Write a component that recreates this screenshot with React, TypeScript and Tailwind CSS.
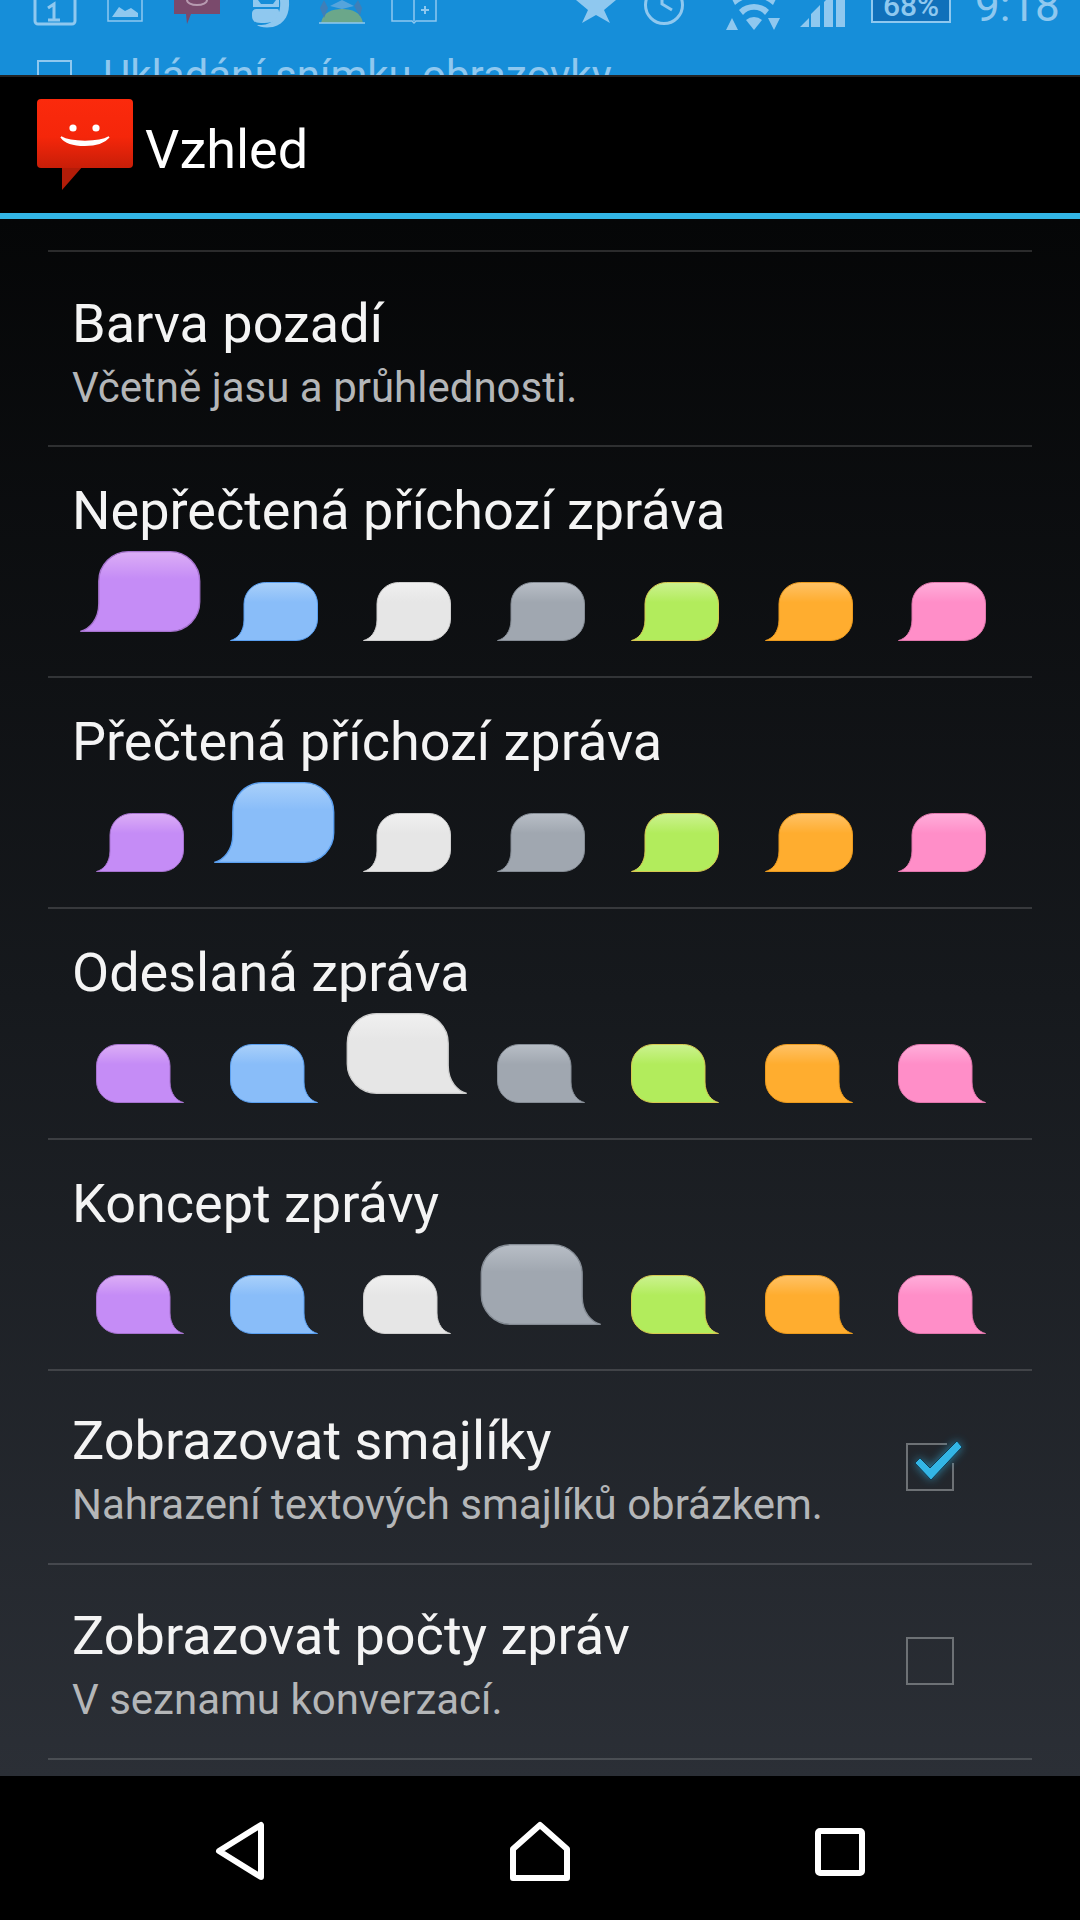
const ICON = "#8fc8ef";

type Swatch = { fill: string; gloss: string; edge: string };

const swatches: Swatch[] = [
  { fill: "#c58cf6", gloss: "#dcaef6", edge: "#a673cf" },
  { fill: "#89bdf9", gloss: "#a9d0fa", edge: "#5a9ff0" },
  { fill: "#e6e6e6", gloss: "#f0f0f0", edge: "#cfcfcf" },
  { fill: "#a0a7b0", gloss: "#b8bec6", edge: "#858c95" },
  { fill: "#b2ec5c", gloss: "#ccf290", edge: "#d6c850" },
  { fill: "#ffad2f", gloss: "#ffc266", edge: "#eb9a1e" },
  { fill: "#ff8ec8", gloss: "#ffaeda", edge: "#e077ac" },
];

function Bubble({ swatch, big, out }: { swatch: Swatch; big: boolean; out: boolean }) {
  const id = "g" + swatch.fill.slice(1);
  return (
    <svg
      viewBox="0 0 88 59"
      className={big ? "w-[122px] h-[81px] mb-[9px]" : "w-[88px] h-[59px]"}
    >
      <defs>
        <linearGradient id={id} x1="0" y1="0" x2="0" y2="1">
          <stop offset="0" stopColor={swatch.gloss} />
          <stop offset="0.34" stopColor={swatch.fill} />
          <stop offset="1" stopColor={swatch.fill} />
        </linearGradient>
      </defs>
      <path
        transform={out ? "translate(88 0) scale(-1 1)" : undefined}
        d="M0.5 58.5C7 57 14 50 14 38V22A21.5 21.5 0 0 1 35.5 .5H66A21.5 21.5 0 0 1 87.5 22V37A21.5 21.5 0 0 1 66 58.5Z"
        fill={`url(#${id})`}
        stroke={swatch.edge}
        strokeWidth="1"
      />
    </svg>
  );
}

function BubbleRow({ title, selected, out }: { title: string; selected: number; out?: boolean }) {
  return (
    <div className="h-[231px] mx-[48px] border-b-2 border-white/15 pt-[34px]">
      <div className="pl-[24px] text-[54px] leading-[60px] text-[#f4f4f4]">{title}</div>
      <div className="flex items-end h-[100px] pl-[25px]">
        {swatches.map((s, i) => (
          <div key={i} className="w-[133.75px] flex justify-center">
            <Bubble swatch={s} big={i === selected} out={!!out} />
          </div>
        ))}
      </div>
    </div>
  );
}

function TextRow({ title, sub, children }: { title: string; sub: string; children?: React.ReactNode }) {
  return (
    <div className="h-[194.5px] mx-[48px] border-b-2 border-white/15 flex items-center justify-between pl-[24px] pr-[78px]">
      <div className={children ? "mt-[7px]" : "mt-[10px]"}>
        <div className="text-[54px] leading-[60px] text-[#f4f4f4]">{title}</div>
        <div className="text-[42px] leading-[48px] mt-[10px] text-[#b4b6b8]">{sub}</div>
      </div>
      {children}
    </div>
  );
}

function Checkbox({ checked }: { checked?: boolean }) {
  return (
    <svg viewBox="0 0 60 54" className="w-[60px] h-[54px] -mr-[12px] overflow-visible">
      {checked ? (
        <>
          <defs>
            <filter id="glow" x="-40%" y="-40%" width="180%" height="180%">
              <feGaussianBlur stdDeviation="5" />
            </filter>
          </defs>
          <path d="M41 4H1V50H47V23" fill="none" stroke="#6d7175" strokeWidth="2" />
          <polygon points="9,23 14,18 24,28 51,1 56,7 25,40" fill="#33b5e5" opacity="0.7" filter="url(#glow)" />
          <polygon points="9,23 14,18 24,28 51,1 56,7 25,40" fill="#33b5e5" stroke="#123c52" strokeWidth="1" strokeLinejoin="round" />
        </>
      ) : (
        <path d="M1 4H47V50H1Z" fill="none" stroke="#6d7175" strokeWidth="2" />
      )}
    </svg>
  );
}

function StatusIcon({ w, ml, children }: { w: number; ml: string; children: React.ReactNode }) {
  return (
    <svg viewBox={`0 0 ${w} 32`} width={w} height={32} className={`shrink-0 ${ml}`}>
      {children}
    </svg>
  );
}

function StatusBar() {
  return (
    <div className="h-[75px] overflow-hidden bg-[#168ed9] text-[#8fc8ef]">
      <div className="flex h-[32px]">
        <StatusIcon w={44} ml="ml-[33px]">
          <rect x="2" y="-10" width="40" height="34" rx="3" fill="none" stroke={ICON} strokeWidth="3" />
          <path d="M15 8L21 4V20M15 20H27" fill="none" stroke={ICON} strokeWidth="3" />
        </StatusIcon>
        <StatusIcon w={36} ml="ml-[30px]">
          <rect x="1" y="-8" width="34" height="29" fill="none" stroke={ICON} strokeWidth="1.5" />
          <path d="M5 17L12 7L18 11L24 8L31 13V17Z" fill={ICON} />
        </StatusIcon>
        <StatusIcon w={46} ml="ml-[31px]">
          <path d="M0 -5H46V14H17L13 24L12 14H0Z" fill="#7a4a6c" />
          <path d="M13 0A10 5 0 0 0 33 0" fill="none" stroke="#b79ab0" strokeWidth="2" />
        </StatusIcon>
        <StatusIcon w={40} ml="ml-[31px]">
          <path d="M2 0H7L10 4H22L25 0H28V7H2Z" fill={ICON} />
          <path d="M5 9H26C28 9 28 11 28 13V18C26 21 20 23 10 23C3 23 1 20 1 16V13C1 11 3 9 5 9Z" fill={ICON} />
          <path d="M29 0H38C39 14 34 24 22 27C14 28 8 27 6 25C18 26 31 20 29 0Z" fill={ICON} />
        </StatusIcon>
        <StatusIcon w={48} ml="ml-[27px]">
          <path d="M3 23C5 12 14 9 24 9C34 9 43 12 45 23Z" fill="#6ba78a" />
          <path d="M2 8L6 0L10 8L6 18ZM36 6L40 0L44 8L42 16Z" fill="#3f7fb8" />
          <path d="M12 6L24 0L36 6L24 9Z" fill="#55a4dc" />
          <path d="M1 23H47" stroke={ICON} strokeWidth="1.5" />
        </StatusIcon>
        <StatusIcon w={46} ml="ml-[25px]">
          <path d="M1 -4V21H21L23 23L25 21H45V-4M23 -4V21" fill="none" stroke={ICON} strokeWidth="1.5" />
          <path d="M34 6V14M30 10H38" stroke={ICON} strokeWidth="2" />
        </StatusIcon>
        <StatusIcon w={40} ml="ml-[139px]">
          <path d="M0 0H40L28 10L34 23L20 15L6 23L12 10Z" fill={ICON} />
        </StatusIcon>
        <StatusIcon w={42} ml="ml-[27px]">
          <circle cx="21" cy="5" r="18.5" fill="none" stroke={ICON} strokeWidth="3" />
          <path d="M19 -2V4L29 10" fill="none" stroke={ICON} strokeWidth="3" />
        </StatusIcon>
        <StatusIcon w={56} ml="ml-[41px]">
          <path d="M6 -1H50L47 5A28 28 0 0 0 9 5Z" fill={ICON} />
          <path d="M13 10A22 22 0 0 1 43 10L39 15A14 14 0 0 0 17 15Z" fill={ICON} />
          <path d="M20 20A12 12 0 0 1 36 20L28 30Z" fill={ICON} />
          <path d="M0 30L6 18L12 30ZM42 18H54L48 30Z" fill={ICON} />
        </StatusIcon>
        <StatusIcon w={46} ml="ml-[18px]">
          <path d="M0 27L9 18V27ZM11 27V14L20 5V27ZM24 27V2L33 -7V27ZM36 27V-7H45V27Z" fill={ICON} />
        </StatusIcon>
        <div className="ml-[25px] -mt-[22px] h-[45px] w-[80px] shrink-0 bg-[#1070ba] border-2 border-[#8fc8ef] text-center text-[30px] leading-[52px] font-medium">
          68%
        </div>
        <div className="ml-[24px] -mt-[22px] text-[44px] leading-[56px]">9:18</div>
      </div>
      <div className="flex items-start mt-[28px] pl-[37px]">
        <div className="w-[35px] h-[35px] border-2 border-[#8fc8ef]" />
        <div className="ml-[31px] -mt-[10px] text-[42px] leading-[52px]">Ukládání snímku obrazovky</div>
      </div>
    </div>
  );
}

function ActionBar() {
  return (
    <div className="h-[144px] border-t-2 border-[#222324] border-b-[6px] border-b-[#33b5e5] bg-black flex items-start pl-[37px] pt-[22px]">
      <svg viewBox="0 0 97 92" className="w-[97px] h-[92px] shrink-0">
        <defs>
          <linearGradient id="logo" x1="0" y1="0" x2="0" y2="1">
            <stop offset="0" stopColor="#fb2a0c" />
            <stop offset="0.55" stopColor="#f5260a" />
            <stop offset="1" stopColor="#c81e08" />
          </linearGradient>
        </defs>
        <path d="M25 67H46L25 91Z" fill="#b31c08" />
        <rect x="0" y="0" width="96" height="69" rx="4" fill="url(#logo)" />
        <circle cx="36" cy="29" r="3.6" fill="#fff" />
        <circle cx="59" cy="29" r="3.6" fill="#fff" />
        <path d="M24 38C32 49 63 49 72 38C62 44 34 44 24 38Z" fill="#fff" stroke="#fff" strokeWidth="1.5" />
      </svg>
      <div className="ml-[11px] mt-[19px] text-[54px] leading-[64px] text-white">Vzhled</div>
    </div>
  );
}

function NavBar() {
  return (
    <div className="h-[144px] bg-black flex justify-center items-start pt-[45px]">
      <div className="w-[300px] flex justify-center">
        <svg viewBox="0 0 50 60" className="w-[50px] h-[60px]">
          <path d="M46 4V56L4 30Z" fill="none" stroke="#fff" strokeWidth="6" strokeLinejoin="round" />
        </svg>
      </div>
      <div className="w-[300px] flex justify-center">
        <svg viewBox="0 0 60 60" className="w-[60px] h-[60px]">
          <path d="M3 28L30 4L57 28V57H3Z" fill="none" stroke="#fff" strokeWidth="6" strokeLinejoin="round" />
        </svg>
      </div>
      <div className="w-[300px] flex justify-center">
        <svg viewBox="0 0 50 60" className="w-[50px] h-[60px]">
          <rect x="3" y="10" width="44" height="42" rx="2" fill="none" stroke="#fff" strokeWidth="6" />
        </svg>
      </div>
    </div>
  );
}

export default function App() {
  return (
    <div className="w-[1080px] h-[1920px] flex flex-col overflow-hidden bg-black font-['Roboto',sans-serif]">
      <StatusBar />
      <ActionBar />
      <div className="h-[1557px] bg-[linear-gradient(180deg,#050607_0%,#16191d_50%,#2b2f36_100%)]">
        <div className="h-[33px] mx-[48px] border-b-2 border-white/15" />
        <TextRow title="Barva pozadí" sub="Včetně jasu a průhlednosti." />
        <BubbleRow title="Nepřečtená příchozí zpráva" selected={0} />
        <BubbleRow title="Přečtená příchozí zpráva" selected={1} />
        <BubbleRow title="Odeslaná zpráva" selected={2} out />
        <BubbleRow title="Koncept zprávy" selected={3} out />
        <TextRow title="Zobrazovat smajlíky" sub="Nahrazení textových smajlíků obrázkem.">
          <Checkbox checked />
        </TextRow>
        <TextRow title="Zobrazovat počty zpráv" sub="V seznamu konverzací.">
          <Checkbox />
        </TextRow>
      </div>
      <NavBar />
    </div>
  );
}
